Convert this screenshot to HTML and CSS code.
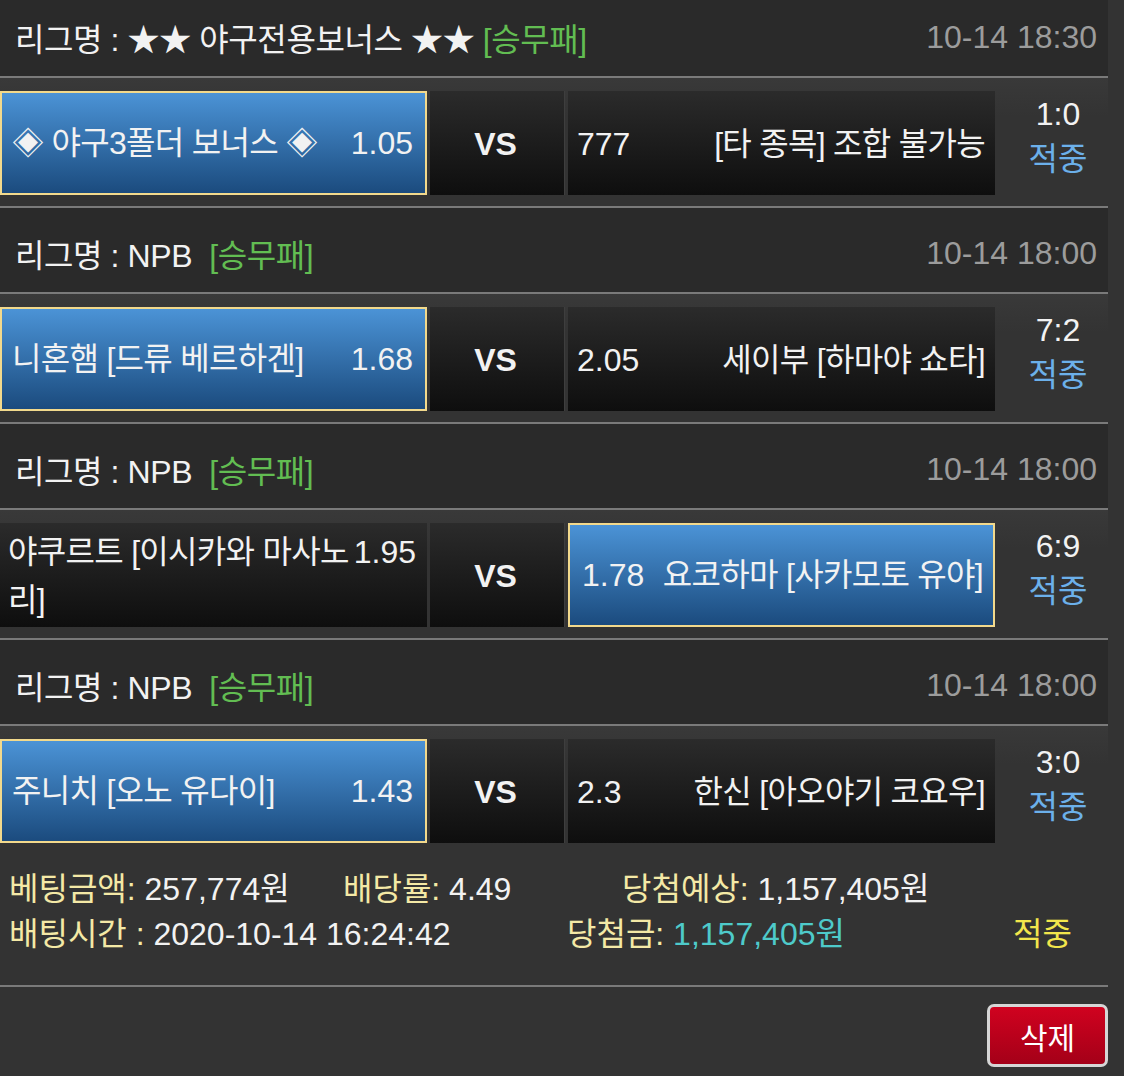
FILE: index.html
```html
<!DOCTYPE html>
<html lang="ko">
<head>
    <meta charset="UTF-8">
    <meta name="viewport" content="width=device-width, initial-scale=1.0">
    <title>배팅내역</title>
    <link rel="stylesheet" href="styles.css">
</head>
<body>
    <div class="slip">
        <div class="game">
            <div class="league">
                <span class="league-name">리그명 : ★★ 야구전용보너스 ★★ <span class="type">[승무패]</span></span>
                <span class="time">10-14 18:30</span>
            </div>
            <div class="match">
                <div class="pick home selected">
                    <div class="pick-line"><span class="team">◈ 야구3폴더 보너스 ◈</span><span class="odds">1.05</span></div>
                </div>
                <div class="pick vs">VS</div>
                <div class="pick away">
                    <div class="pick-line"><span class="odds">777</span><span class="team">[타 종목] 조합 불가능</span></div>
                </div>
                <div class="result"><span class="score">1:0</span><span class="hit">적중</span></div>
            </div>
        </div>

        <div class="game">
            <div class="league">
                <span class="league-name">리그명 : NPB &nbsp;<span class="type">[승무패]</span></span>
                <span class="time">10-14 18:00</span>
            </div>
            <div class="match">
                <div class="pick home selected">
                    <div class="pick-line"><span class="team">니혼햄 [드류 베르하겐]</span><span class="odds">1.68</span></div>
                </div>
                <div class="pick vs">VS</div>
                <div class="pick away">
                    <div class="pick-line"><span class="odds">2.05</span><span class="team">세이부 [하마야 쇼타]</span></div>
                </div>
                <div class="result"><span class="score">7:2</span><span class="hit">적중</span></div>
            </div>
        </div>

        <div class="game">
            <div class="league">
                <span class="league-name">리그명 : NPB &nbsp;<span class="type">[승무패]</span></span>
                <span class="time">10-14 18:00</span>
            </div>
            <div class="match">
                <div class="pick home">
                    <div class="pick-line"><span class="team">야쿠르트 [이시카와 마사노리]</span><span class="odds">1.95</span></div>
                </div>
                <div class="pick vs">VS</div>
                <div class="pick away selected">
                    <div class="pick-line"><span class="odds">1.78</span><span class="team">요코하마 [사카모토 유야]</span></div>
                </div>
                <div class="result"><span class="score">6:9</span><span class="hit">적중</span></div>
            </div>
        </div>

        <div class="game">
            <div class="league">
                <span class="league-name">리그명 : NPB &nbsp;<span class="type">[승무패]</span></span>
                <span class="time">10-14 18:00</span>
            </div>
            <div class="match last">
                <div class="pick home selected">
                    <div class="pick-line"><span class="team">주니치 [오노 유다이]</span><span class="odds">1.43</span></div>
                </div>
                <div class="pick vs">VS</div>
                <div class="pick away">
                    <div class="pick-line"><span class="odds">2.3</span><span class="team">한신 [아오야기 코요우]</span></div>
                </div>
                <div class="result"><span class="score">3:0</span><span class="hit">적중</span></div>
            </div>
        </div>

        <div class="summary">
            <div class="summary-row">
                <span class="cell w1"><span class="label">베팅금액:</span> 257,774원</span>
                <span class="cell w2"><span class="label">배당률:</span> 4.49</span>
                <span class="cell"><span class="label">당첨예상:</span> 1,157,405원</span>
            </div>
            <div class="summary-row">
                <span class="cell w3"><span class="label">배팅시간 :</span> 2020-10-14 16:24:42</span>
                <span class="cell w4"><span class="label">당첨금:</span> <span class="won">1,157,405원</span></span>
                <span class="cell status">적중</span>
            </div>
        </div>

        <div class="actions">
            <button class="delete-btn">삭제</button>
        </div>
    </div>
</body>
</html>
```

FILE: styles.css
```css
body {
    margin: 0;
    background-color: #333;
    font-family: "Liberation Sans", "Noto Sans CJK KR", sans-serif;
    font-feature-settings: "palt";
    font-size: 32px;
    color: #f2f2f2;
}
.slip {
    width: 1108px;
    margin-top: -8px;
}
.league {
    height: 78px;
    display: flex;
    align-items: center;
    justify-content: space-between;
    padding: 6px 11px 0 15px;
    background-color: #2a2a2a;
    border-bottom: 2px solid #7a7a7a;
}
.league-name {
    letter-spacing: -0.4px;
}
.type {
    color: #62bd52;
}
.time {
    color: #9c9c9c;
}
.match {
    height: 130px;
    box-sizing: border-box;
    display: flex;
    gap: 3px;
    padding: 13px 0 11px;
    background: linear-gradient(#393939, #333 30%);
    border-bottom: 2px solid #7a7a7a;
}
.match.last {
    height: 128px;
    border-bottom: none;
}
.pick {
    display: flex;
    flex-direction: column;
    justify-content: center;
    box-sizing: border-box;
    background: linear-gradient(#2b2b2b, #0e0e0e);
    line-height: 48px;
    padding: 2px 11px 0 8px;
}
.home, .away {
    width: 427px;
}
.away {
    padding: 2px 10px 0 9px;
}
.vs {
    width: 135px;
    align-items: center;
    font-weight: bold;
    border-right: 1px solid #3e3e3e;
}
.selected {
    background: linear-gradient(#4b93d6, #1b4b7e);
    border: 2px solid #f2d98c;
    padding: 0 12px 0 10px;
}
.away.selected {
    padding: 0 10px 0 12px;
}
.pick-line {
    display: flex;
    justify-content: space-between;
    align-items: flex-start;
    gap: 3px;
}
.team {
    letter-spacing: -0.7px;
}
.home .team {
    flex: 1;
}
.away .odds {
    flex: none;
}
.result {
    flex: 1;
    display: flex;
    flex-direction: column;
    align-items: center;
    justify-content: center;
    line-height: 45px;
    padding: 0 0 12px 10px;
}
.hit {
    color: #6cb0ea;
}
.summary {
    height: 133px;
    box-sizing: border-box;
    padding: 13px 0 0 9px;
    line-height: 45px;
    border-bottom: 2px solid #7a7a7a;
}
.summary-row {
    display: flex;
}
.w1 {
    width: 334px;
}
.w2 {
    width: 279px;
}
.w3 {
    width: 558px;
}
.w4 {
    width: 446px;
}
.label {
    color: #f4e9a6;
}
.won {
    color: #4ecaca;
}
.status {
    color: #f2e64c;
}
.actions {
    display: flex;
    justify-content: flex-end;
    padding-top: 17px;
}
.delete-btn {
    width: 121px;
    height: 63px;
    font-family: inherit;
    font-size: 30px;
    color: #fff;
    background: linear-gradient(#d0021f, #a40018);
    border: 3px solid #d6d6d6;
    border-radius: 7px;
}
```
